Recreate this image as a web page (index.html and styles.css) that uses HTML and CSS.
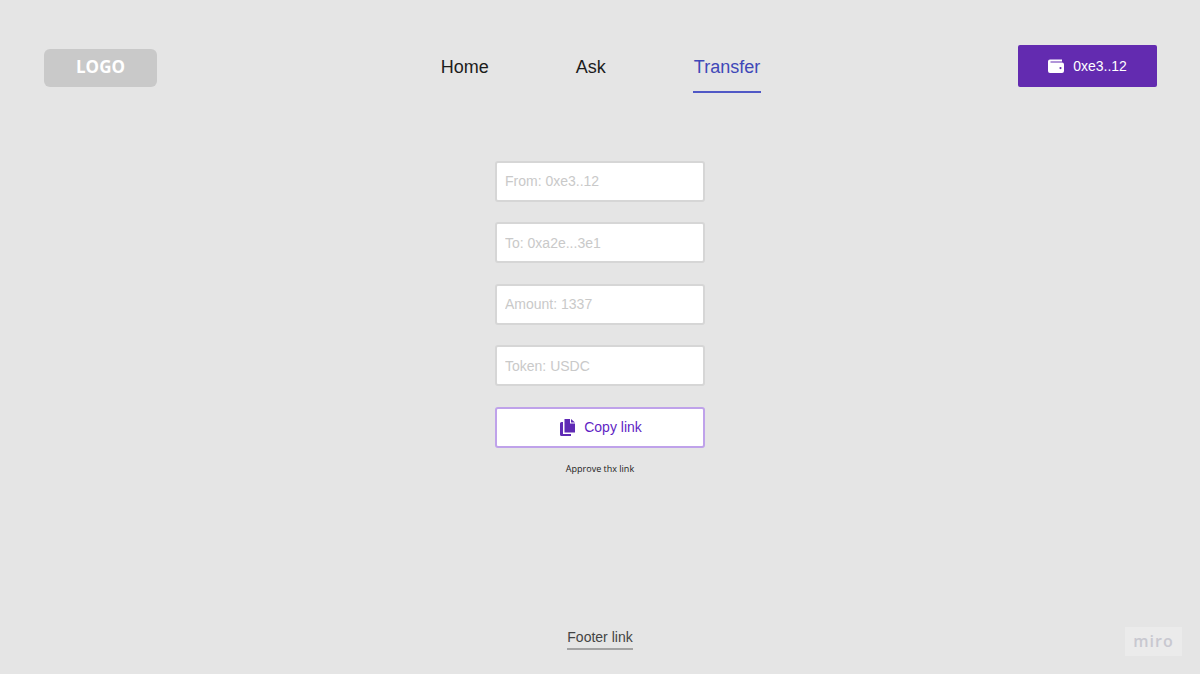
FILE: index.html
```html
<!DOCTYPE html>
<html lang="en">
<head>
  <meta charset="UTF-8">
  <title>Transfer</title>
  <link rel="stylesheet" href="styles.css">
</head>
<body>

  <header class="topbar">
    <div class="logo">LOGO</div>
    <nav class="nav">
      <a class="nav-link" href="#">Home</a>
      <a class="nav-link" href="#">Ask</a>
      <a class="nav-link active" href="#">Transfer</a>
    </nav>
    <button class="wallet-btn" type="button">
      <svg class="wallet-icon" width="16" height="14" viewBox="0 0 16 14">
        <path fill="#fff" fill-rule="evenodd" d="M2 0.5H14V2.5H2.5V3.5H14A2 2 0 0 1 16 5.5V12A2 2 0 0 1 14 14H2A2 2 0 0 1 0 12V2.5A2 2 0 0 1 2 0.5ZM12.5 8A1.1 1.1 0 1 0 12.5 10.2A1.1 1.1 0 1 0 12.5 8Z"/>
      </svg>
      <span>0xe3..12</span>
    </button>
  </header>

  <main class="form">
    <input class="field" type="text" placeholder="From: 0xe3..12">
    <input class="field" type="text" placeholder="To: 0xa2e...3e1">
    <input class="field" type="text" placeholder="Amount: 1337">
    <input class="field" type="text" placeholder="Token: USDC">
    <button class="copy-btn" type="button">
      <svg width="15" height="17" viewBox="0 0 15 17">
        <path fill="#5f2ab5" d="M4.5 0H10V4.5H15V13.5H4.5Z"/>
        <path fill="#5f2ab5" d="M11 0L15 3.5H11Z"/>
        <path fill="#5f2ab5" d="M3 3V15H11V17H1.5A1.5 1.5 0 0 1 0 15.5V4.5A1.5 1.5 0 0 1 1.5 3Z"/>
      </svg>
      <span>Copy link</span>
    </button>
    <p class="hint">Approve thx link</p>
  </main>

  <footer class="footer">
    <a class="footer-link" href="#">Footer link</a>
  </footer>

  <div class="miro">miro</div>

</body>
</html>
```

FILE: styles.css
```css
* {
  box-sizing: border-box;
}

html, body {
  height: 100%;
}

body {
  margin: 0;
  height: 674px;
  overflow: hidden;
  background: #e5e5e5;
  font-family: 'Liberation Sans', Arial, sans-serif;
  color: #1c1c1c;
  display: flex;
  flex-direction: column;
  position: relative;
}

.topbar {
  display: grid;
  grid-template-columns: 1fr auto 1fr;
  align-items: start;
  padding: 45px 43px 0 44px;
  height: 160.5px;
}

.logo {
  justify-self: start;
  width: 113px;
  height: 38px;
  margin-top: 4px;
  background: #c9c9c9;
  border-radius: 6px;
  color: #fff;
  font-family: 'Open Sans', sans-serif;
  font-weight: 700;
  font-size: 17px;
  line-height: 36px;
  text-align: center;
}

.nav {
  display: flex;
  gap: 85px;
  padding-top: 10px;
}

.nav-link {
  color: #1c1c1c;
  text-decoration: none;
  font-size: 18px;
  line-height: 24px;
  padding: 0 1px 12px;
  border-bottom: 2px solid transparent;
}

.nav-link.active {
  margin-left: 1px;
  color: #3f48b8;
  border-bottom-color: #5058c6;
}

.wallet-btn {
  justify-self: end;
  width: 139px;
  height: 42px;
  background: #632bb0;
  border: none;
  border-radius: 2px;
  color: #fff;
  font-family: inherit;
  font-size: 14px;
  display: flex;
  align-items: center;
  justify-content: center;
  gap: 9px;
}

.form {
  width: 210px;
  margin: 0 auto;
  display: flex;
  flex-direction: column;
  gap: 20.5px;
}

.field {
  width: 100%;
  height: 41px;
  padding: 0 8px;
  background: #fff;
  border: 2px solid #d6d6d6;
  border-radius: 3px;
  font-family: inherit;
  font-size: 14px;
}

.field::placeholder {
  color: #c9c9c9;
  opacity: 1;
}

.copy-btn {
  width: 100%;
  height: 41px;
  padding: 0 0 0 2px;
  background: #fff;
  border: 2px solid #bfa2ea;
  border-radius: 3px;
  color: #5f1fc4;
  font-family: inherit;
  font-size: 14px;
  display: flex;
  align-items: center;
  justify-content: center;
  gap: 9px;
}

.hint {
  margin: -5px 0 0;
  text-align: center;
  font-family: 'Open Sans', sans-serif;
  font-size: 9px;
  line-height: 11px;
  color: #222;
}

.footer {
  margin-top: auto;
  padding-bottom: 24px;
  text-align: center;
}

.footer-link {
  display: inline-block;
  color: #444;
  text-decoration: none;
  font-size: 14px;
  line-height: 17px;
  padding-bottom: 2px;
  border-bottom: 2px solid #a3a3a3;
}

/* watermark sits over the page corner */
.miro {
  position: absolute;
  left: 1125px;
  top: 627px;
  width: 57px;
  height: 29px;
  background: #ebebeb;
  color: #c8c8d0;
  font-family: 'Open Sans', sans-serif;
  font-weight: 600;
  font-size: 16px;
  line-height: 28px;
  letter-spacing: 1px;
  text-align: center;
}
```
